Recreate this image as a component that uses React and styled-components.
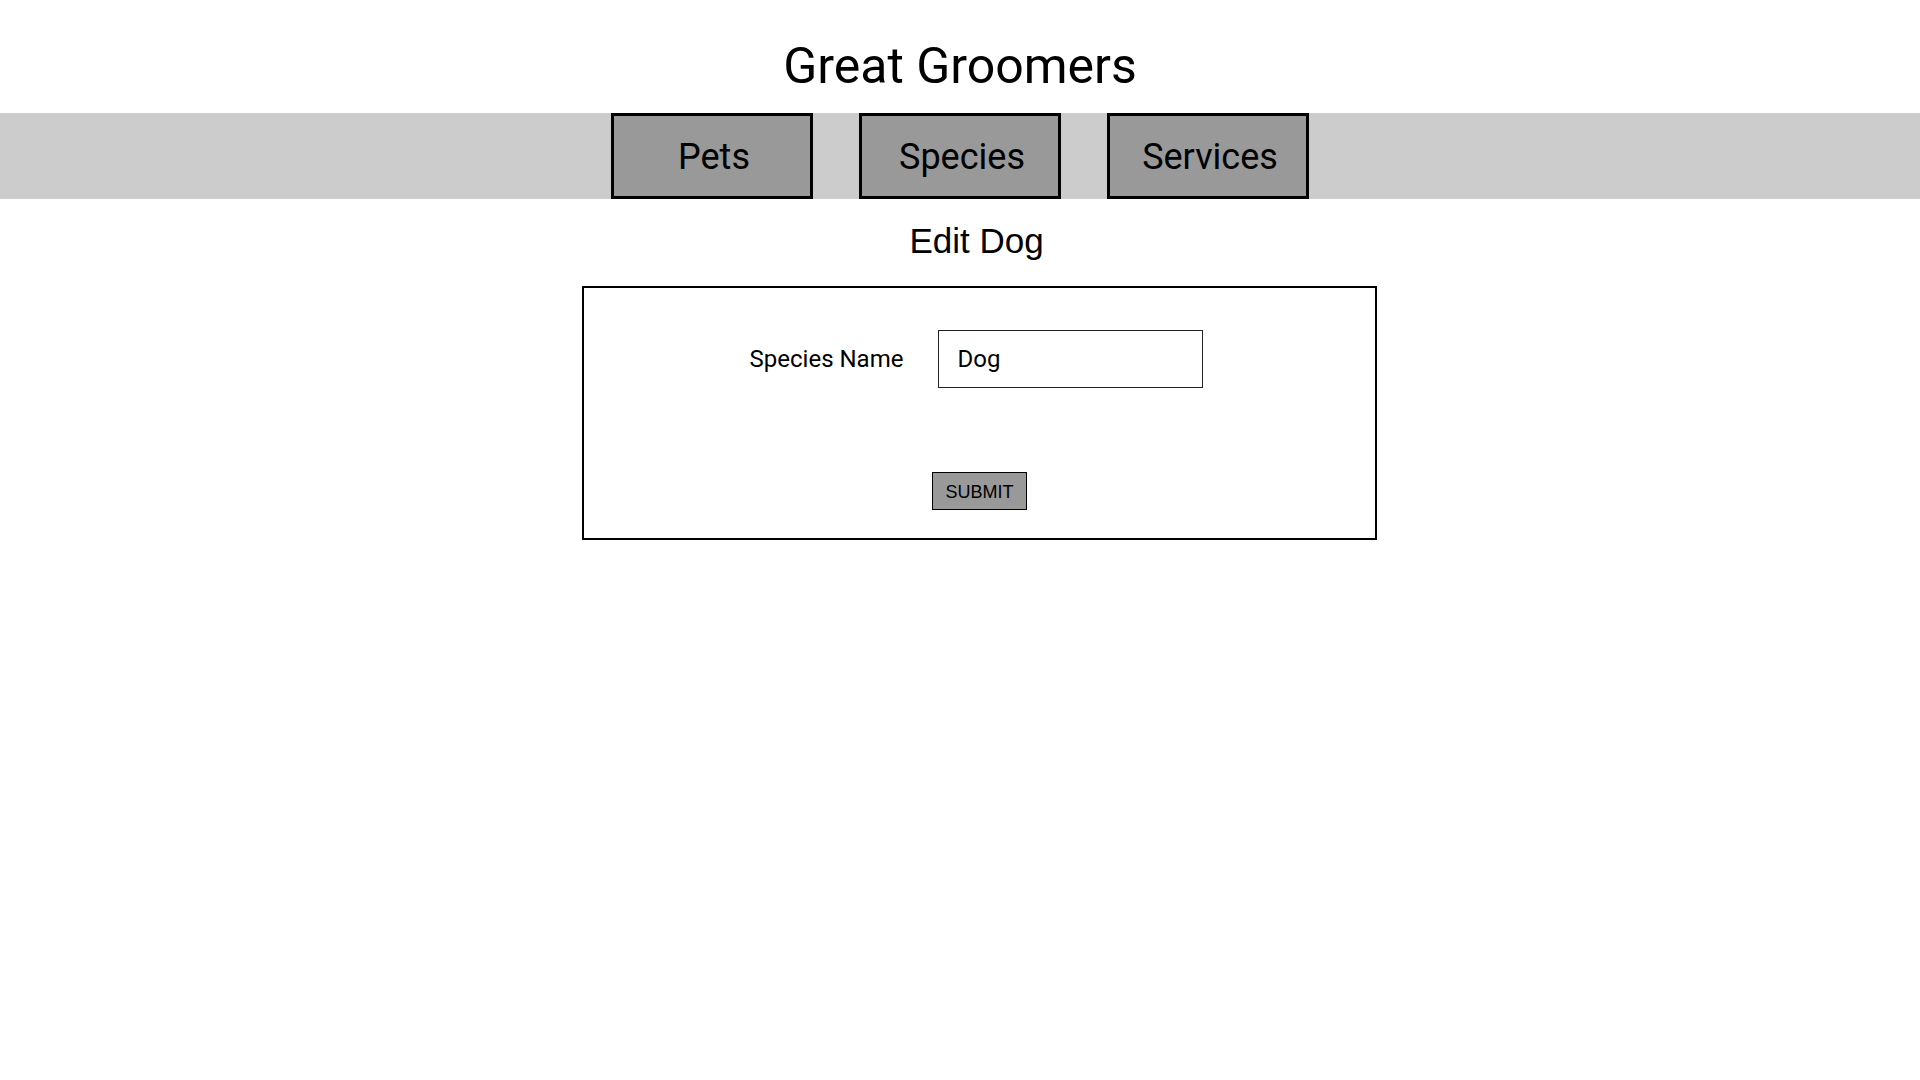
import React from "react";
import styled, { createGlobalStyle } from "styled-components";

const GlobalStyle = createGlobalStyle`
    body {
        margin: 0;
        font-family: Roboto, "Liberation Sans", sans-serif;
        color: #000;
        background: #fff;
    }
`;

const Title = styled.h1`
    margin: 0;
    padding-top: 37px;
    margin-bottom: 18px;

    font-size: 50px;
    font-weight: 400;
    line-height: 58px;
    text-align: center;
`;

const Nav = styled.nav`
    display: flex;
    justify-content: center;
    gap: 46px;

    height: 86px;

    background-color: #cccccc;
`;

const NavButton = styled.a`
    display: flex;
    align-items: center;
    justify-content: center;

    box-sizing: border-box;
    width: 202px;
    height: 86px;
    padding: 2px 0 0 4px;

    border: 3px solid #000;
    background-color: #999999;

    color: #000;
    font-size: 36px;
    text-decoration: none;
    cursor: pointer;
`;

const Main = styled.main`
    display: flex;
    flex-direction: column;
    align-items: center;

    padding-left: 39px;
`;

const Heading = styled.h2`
    margin: 23px 0 26px;
    padding-right: 6px;

    font-family: "Liberation Sans", Arial, sans-serif;
    font-size: 35px;
    font-weight: 400;
    line-height: 38px;
`;

const Form = styled.form`
    display: flex;
    flex-direction: column;
    align-items: center;

    box-sizing: border-box;
    width: 795px;
    padding: 42px 0 28px;

    border: 2px solid #000;
`;

const Row = styled.div`
    display: flex;
    align-items: center;
    gap: 35px;

    padding-right: 6px;
`;

const Label = styled.label`
    font-size: 24px;
`;

const Input = styled.input`
    box-sizing: border-box;
    width: 265px;
    height: 58px;
    padding: 0 18px;

    border: 1px solid #222;
    outline: none;

    font-family: Roboto, "Liberation Sans", sans-serif;
    font-size: 24px;
    color: #000;
`;

const Submit = styled.button`
    box-sizing: border-box;
    width: 95px;
    height: 38px;
    margin-top: 84px;
    padding: 2px 0 0;

    border: 1px solid #000;
    background-color: #999999;

    font-family: "Liberation Sans", Arial, sans-serif;
    font-size: 18px;
    color: #000;
`;

export default function App() {
    return (
        <>
            <GlobalStyle />
            <header>
                <Title>Great Groomers</Title>
                <Nav>
                    <NavButton>Pets</NavButton>
                    <NavButton>Species</NavButton>
                    <NavButton>Services</NavButton>
                </Nav>
            </header>
            <Main>
                <Heading>Edit Dog</Heading>
                <Form onSubmit={(e) => e.preventDefault()}>
                    <Row>
                        <Label htmlFor="species-name">Species Name</Label>
                        <Input id="species-name" defaultValue="Dog" />
                    </Row>
                    <Submit type="submit">SUBMIT</Submit>
                </Form>
            </Main>
        </>
    );
}
